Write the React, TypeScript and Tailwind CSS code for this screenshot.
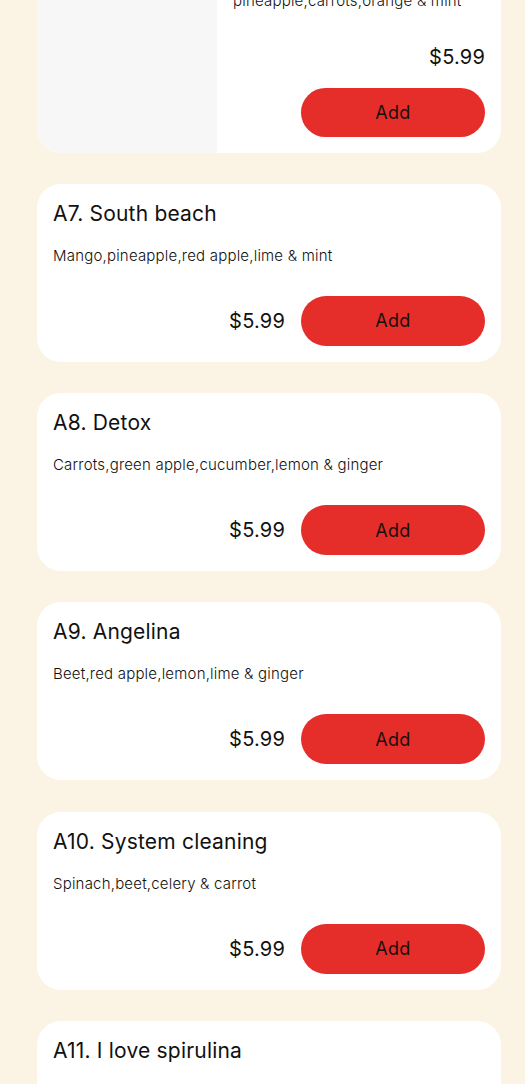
import React from "react";

const items = [
  { title: "A7. South beach", desc: "Mango,pineapple,red apple,lime & mint" },
  { title: "A8. Detox", desc: "Carrots,green apple,cucumber,lemon & ginger" },
  { title: "A9. Angelina", desc: "Beet,red apple,lemon,lime & ginger" },
  { title: "A10. System cleaning", desc: "Spinach,beet,celery & carrot" },
  { title: "A11. I love spirulina", desc: "Spirulina,banana,pineapple & apple" },
];

function AddButton({ short }: { short?: boolean }) {
  return (
    <button
      className={
        (short ? "h-[49px] " : "h-[50px] ") +
        "w-[184px] rounded-full bg-[#e52d2a] text-[18px] tracking-[0.3px] text-[#1a0f0f] flex items-center justify-center"
      }
    >
      Add
    </button>
  );
}

export default function App() {
  return (
    <div
      className="min-h-screen bg-[#fbf4e4] overflow-hidden"
      style={{ fontFamily: '"Inter", "Noto Sans", sans-serif' }}
    >
      <div className="-mt-[92px] pl-[37px] pr-[24px] flex flex-col gap-[31.33px] pb-10">
        <div className="flex bg-white rounded-[24px] overflow-hidden">
          <div className="w-[180px] shrink-0 bg-[#f7f7f7]" />
          <div className="flex-1 flex flex-col p-[16px]">
            <div className="text-[21px] leading-[28px] text-[#111]">A6. Tropical</div>
            <div className="mt-[17px] text-[15px] leading-[21px] tracking-[0.2px] text-[#111] font-light">
              Apple,kiwi,spinach,
              <br />
              pineapple,carrots,orange &amp; mint
            </div>
            <div className="mt-[30px] h-[32px] flex items-center justify-end text-[20px] tracking-[0.2px] text-[#111]">
              $5.99
            </div>
            <div className="mt-[14.5px] flex justify-end">
              <AddButton short />
            </div>
          </div>
        </div>
        {items.map((it) => (
          <div key={it.title} className="bg-white rounded-[24px] p-[16px] flex flex-col">
            <div className="text-[21px] leading-[28px] tracking-[0.2px] text-[#111]">{it.title}</div>
            <div className="mt-[17px] text-[15px] leading-[21px] tracking-[0.2px] text-[#111] font-light">
              {it.desc}
            </div>
            <div className="mt-[30px] flex items-center justify-end gap-[16px]">
              <span className="text-[20px] tracking-[0.2px] text-[#111]">$5.99</span>
              <AddButton />
            </div>
          </div>
        ))}
      </div>
    </div>
  );
}
